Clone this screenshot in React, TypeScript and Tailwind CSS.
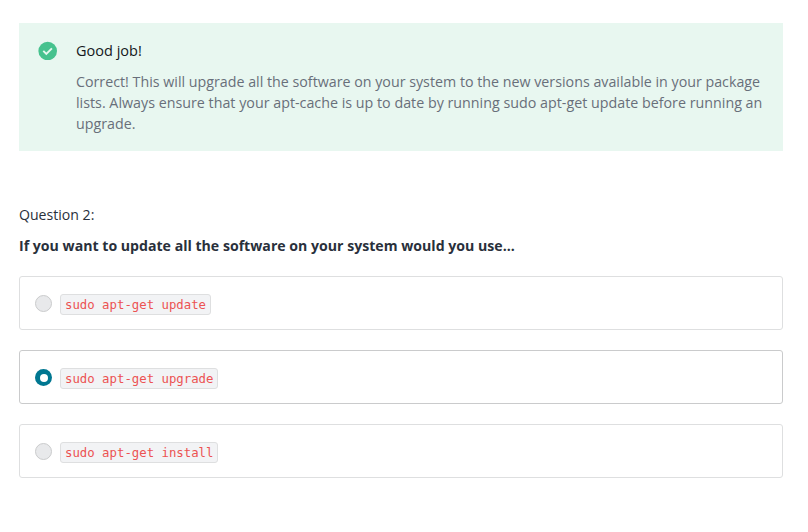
const options = [
  { cmd: "sudo apt-get update", w: "w-[151px]", selected: false },
  { cmd: "sudo apt-get upgrade", w: "w-[158px]", selected: true },
  { cmd: "sudo apt-get install", w: "w-[158px]", selected: false },
];

export default function App() {
  return (
    <main className="h-[532px] w-[808px] bg-white pt-[23px] pl-[19px] font-['Open_Sans',sans-serif] text-[14px] text-[#29303b]">
      <section className="flex h-[128px] w-[764px] bg-[#e8f7f0] pt-[17px] pl-[19px]">
        <svg className="mt-[1px] h-[19px] w-[19px] shrink-0" viewBox="0 0 19 19">
          <circle cx="9.7" cy="10" r="9.3" fill="#46c28e" />
          <path d="M5.3 9.9l3 3 5.6-5.6" fill="none" stroke="#e8f7f0" strokeWidth="1.9" />
        </svg>
        <div className="ml-[19px]">
          <h2 className="text-[14.5px] leading-[21px] text-[#14171c]">Good job!</h2>
          <p className="mt-[10px] leading-[21px] text-[#686f7a]">
            <span className="block text-[14.25px] whitespace-nowrap">Correct! This will upgrade all the software on your system to the new versions available in your package</span>
            <span className="block text-[14.29px] whitespace-nowrap">lists. Always ensure that your apt-cache is up to date by running sudo apt-get update before running an</span>
            <span className="block text-[14.25px] whitespace-nowrap">upgrade.</span>
          </p>
        </div>
      </section>
      <h3 className="mt-[53px] text-[14.1px] leading-[21px]">Question 2:</h3>
      <p className="mt-[10px] text-[14.13px] leading-[21px] font-bold">If you want to update all the software on your system would you use...</p>
      <div className="mt-[20px] flex w-[764px] flex-col gap-[20px]">
        {options.map((o) => (
          <label key={o.cmd} className={`flex h-[54px] items-start rounded-[3px] border pl-[15px] ${o.selected ? "border-[#cacbcc]" : "border-[#dedfe0]"}`}>
            <span className={`mt-[18px] grid h-[17px] w-[17px] place-items-center rounded-full ${o.selected ? "bg-[#007791]" : "border border-[#cacbcc] bg-[#e8e9eb]"}`}>
              {o.selected && <span className="h-[8px] w-[8px] rounded-full bg-white" />}
            </span>
            <code className={`mt-[17px] ml-[8px] flex h-[21px] items-center rounded-[3px] border border-[#dedfe0] bg-[#f2f3f5] pt-[2px] pl-[4px] font-['DejaVu_Sans_Mono',monospace] text-[12.33px] whitespace-nowrap text-[#ec5252] ${o.w}`}>{o.cmd}</code>
          </label>
        ))}
      </div>
    </main>
  );
}
